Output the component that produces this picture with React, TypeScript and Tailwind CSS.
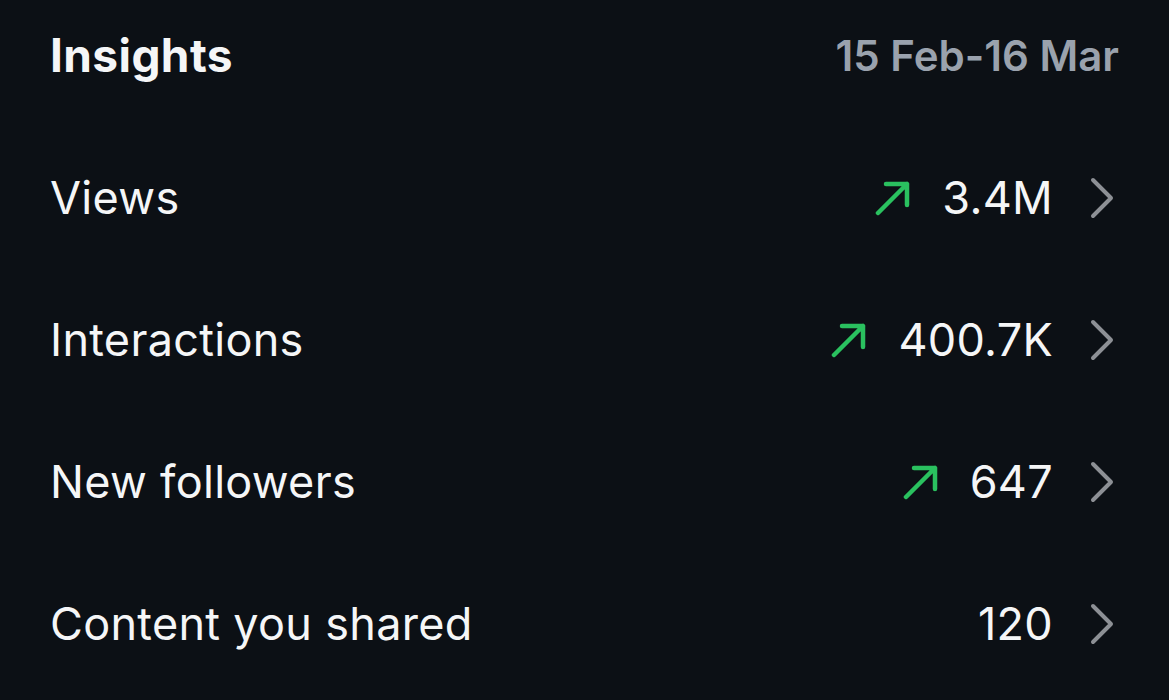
const rows = [
  { label: 'Views', value: '3.4M', up: true },
  { label: 'Interactions', value: '400.7K', up: true },
  { label: 'New followers', value: '647', up: true },
  { label: 'Content you shared', value: '120', up: false },
]

function UpArrow() {
  return (
    <svg width="36" height="36" viewBox="0 0 36 36" fill="none" className="shrink-0">
      <path d="M3 33 L32 4 M11 4 H32 V25" stroke="#2ac15f" strokeWidth="4.5" strokeLinecap="round" strokeLinejoin="round" />
    </svg>
  )
}

function Chevron() {
  return (
    <svg width="26" height="42" viewBox="0 0 26 42" fill="none" className="shrink-0">
      <path d="M4 3 L22 21 L4 39" stroke="#8d9095" strokeWidth="4" strokeLinecap="round" strokeLinejoin="round" />
    </svg>
  )
}

export default function App() {
  return (
    <div className="w-[1169px] h-[700px] bg-[#0c1015] text-[#f5f6f7] px-[50px] overflow-hidden" style={{ fontFamily: 'Inter, "Liberation Sans", sans-serif' }}>
      <div className="h-[110px] flex items-center justify-between">
        <h1 className="text-[46px] font-bold tracking-[0.4px]">Insights</h1>
        <span className="text-[42px] font-semibold text-[#9aa2ad]">15 Feb-16 Mar</span>
      </div>
      <div className="mt-[17px]">
        {rows.map(r => (
          <div key={r.label} className="h-[142px] flex items-center justify-between">
            <span className="text-[45px] tracking-[0.3px]">{r.label}</span>
            <div className="flex items-center">
              {r.up && <UpArrow />}
              <span className="text-[45px] ml-[31px] tracking-[0.3px]">{r.value}</span>
              <div className="ml-[36px] mr-[4px]"><Chevron /></div>
            </div>
          </div>
        ))}
      </div>
    </div>
  )
}
